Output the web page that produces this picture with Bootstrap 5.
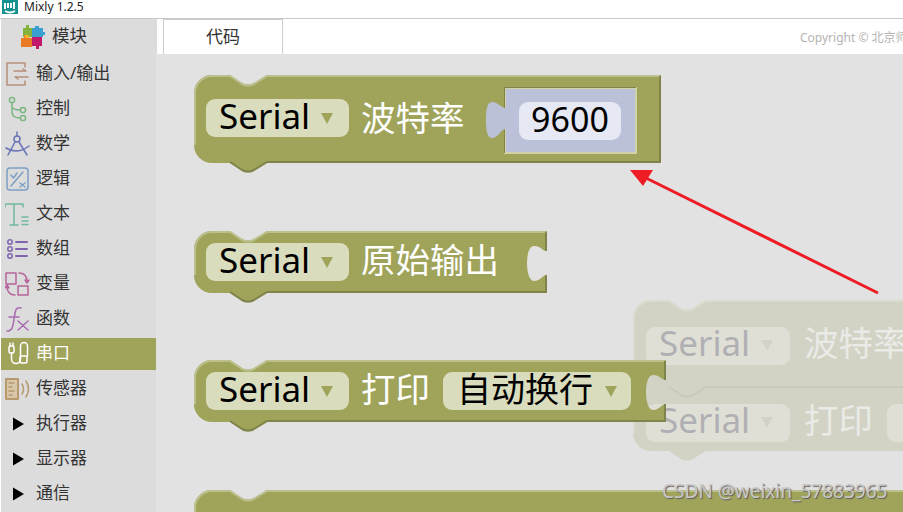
<!DOCTYPE html>
<html lang="zh">
<head>
<meta charset="utf-8">
<title>Mixly 1.2.5</title>
<link href="https://cdn.jsdelivr.net/npm/bootstrap@5.3.0/dist/css/bootstrap.min.css" rel="stylesheet">
<style>
html,body{width:903px;height:512px;overflow:hidden;background:#fff;font-family:"Noto Sans","Noto Sans CJK SC",sans-serif;}
.app-shell{width:903px;height:512px;}
.title-bar{height:19px;border-bottom:1px solid #c8c8c8;padding-left:2px;gap:6px;font-size:12px;line-height:13px;color:#222;}
.head-row{height:35px;}
.side-head{width:156px;margin-left:1px;background:#dcdcdc;font-size:17.500px;color:#333;gap:7px;padding-left:20px;line-height:34px;}
.side-head span{padding-bottom:3px;}
.tab-strip{flex:1;min-width:0;padding-left:6px;}
.code-tab{width:120px;height:35px;border:1px solid #ccc;border-bottom:0;font-size:17px;color:#333;background:#fff;}
.copy-note{font-size:12px;color:#b4b4b4;white-space:nowrap;margin-left:auto;width:103px;padding-top:3px;}
.main-row{height:458px;}
.side-list{width:155px;margin-left:1px;background:#dcdcdc;padding-top:4px;gap:3px;overflow:hidden;}
.side-item{height:32px;flex:none;padding-left:4px;gap:1px;font-size:17px;color:#333;line-height:30px;}
.side-item.is-on{background:#a0a45b;color:#fff;}
.side-ico{width:30px;height:32px;flex:none;fill:none;stroke-width:1.5;stroke-linecap:round;stroke-linejoin:round;}
.workspace{flex:1;background:#e2e2e2;position:relative;overflow:hidden;}
.blk{position:absolute;display:flex;align-items:center;gap:13px;padding-left:12px;color:#fff;font-size:34.500px;line-height:38px;white-space:nowrap;}
.blk-shape{position:absolute;left:0;top:0;overflow:visible;}
.blk>span{position:relative;padding-bottom:5px;margin-left:-1px;}
.blk-a{left:38px;top:21px;width:467px;height:88px;align-items:flex-start;padding-top:24px;}
.blk-b{left:38px;top:177px;width:353px;height:62px;}
.blk-c{left:38px;top:306px;width:472px;height:62px;}
.blk-d{left:38px;top:436px;width:709px;height:80px;}
.blk-g{left:477px;top:246px;width:300px;height:151px;color:#eaeae6;display:block;padding:0;}
.pill{position:relative;display:inline-flex;align-items:center;height:38px;border-radius:9px;background:#d9dcbd;color:#000;padding:0 16px 5px 13px;gap:11px;font-size:35px;}
.pill .tri{width:0;height:0;border-left:6.5px solid transparent;border-right:6.5px solid transparent;border-top:11px solid #a0a45b;margin-top:5px;}
.pill.cjk{font-size:34px;padding-right:14px;gap:12px;padding-left:14px;}
.pill.num{position:absolute;left:325px;top:27px;width:102px;justify-content:center;padding:0 0 5px;background:#e6e8f3;font-size:34px;}
.ghost-row{position:absolute;left:13px;display:flex;align-items:center;gap:14px;}
.ghost-row span{padding-bottom:5px;}
.ghost-one{top:24px;}
.ghost-two{top:101px;}
.blk-g .pill{background:#dfdfd6;color:#b0b0b4;padding-right:17px;}
.blk-g .pill .tri{border-top-color:#d3d3c5;}
.blk-g .pill.stub{width:40px;}
.arrow-layer{position:absolute;left:0;top:0;width:747px;height:458px;pointer-events:none;}
.mark-text{position:absolute;left:506px;top:425px;font-size:19px;line-height:24px;color:#c9c9c9;text-shadow:1px 1px 1px #5c5c5c;white-space:nowrap;}
</style>
</head>
<body>
<div class="app-shell d-flex flex-column">
  <div class="title-bar d-flex align-items-start">
    <svg width="16" height="14" viewBox="0 0 16 14"><rect width="16" height="14" fill="#13928f"/><path d="M3 3V9M6 3V8M9 3V8M12 2V9M3 11Q8 14 13 11" fill="none" stroke="#fff" stroke-width="2"/></svg>
    <span>Mixly 1.2.5</span>
  </div>
  <div class="head-row d-flex">
    <div class="side-head d-flex align-items-center">
      <svg width="24" height="24" viewBox="0 0 24 24">
        <path d="M2 3H5V0H8V3H11V6H13V9H11V12H2Z" fill="#84b33c"/>
        <path d="M11 3H14V1H18V3H22V7H24V10H22V12H11Z" fill="#3aa0cf"/>
        <path d="M0 13H3V10H7V13H11V22H0Z" fill="#ea7a26"/>
        <path d="M4 13H8V10H4Z" fill="#f0b325"/>
        <path d="M11 12H21V21H18V24H15V21H11Z" fill="#c2186b"/>
      </svg>
      <span>模块</span>
    </div>
    <div class="tab-strip d-flex align-items-start">
      <div class="code-tab d-flex align-items-center justify-content-center">代码</div>
      <div class="copy-note align-self-center">Copyright © 北京师</div>
    </div>
  </div>
  <div class="main-row d-flex">
    <div class="side-list d-flex flex-column">
      <div class="side-item d-flex">
        <svg class="side-ico" viewBox="0 0 30 32" stroke="#b78f7b"><path d="M20 9V5H2V27H20V23M9 13H21L18 11M23 19H10L13 21"/></svg><span>输入/输出</span></div>
      <div class="side-item d-flex">
        <svg class="side-ico" viewBox="0 0 30 32" stroke="#7cb680"><circle cx="7" cy="7" r="2.600"/><circle cx="18" cy="17" r="2.600"/><circle cx="18" cy="25" r="2.600"/><path d="M7 10V19Q7 25 15 25M7 13Q7 17 15 17"/></svg><span>控制</span></div>
      <div class="side-item d-flex">
        <svg class="side-ico" viewBox="0 0 30 32" stroke="#6a74b6"><circle cx="12" cy="11" r="3"/><path d="M12 4V8M10 14L3 27M14 14L22 27M1 20Q12 27 24 18"/></svg><span>数学</span></div>
      <div class="side-item d-flex">
        <svg class="side-ico" viewBox="0 0 30 32" stroke="#7d9fc4"><rect x="2" y="5" width="21" height="22" rx="3"/><path d="M18 9L6 23M6 12L8.500 15L12 10M15 20L20 24M20 20L15 24"/></svg><span>逻辑</span></div>
      <div class="side-item d-flex">
        <svg class="side-ico" viewBox="0 0 30 32" stroke="#72b89c"><path d="M0 9V6H18V9M9 6V27M5 27H13M17 19H23M17 23H23M17 26.500H23"/></svg><span>文本</span></div>
      <div class="side-item d-flex">
        <svg class="side-ico" viewBox="0 0 30 32" stroke="#7f64ad"><circle cx="5" cy="9" r="2.200"/><circle cx="5" cy="16" r="2.200"/><circle cx="5" cy="23" r="2.200"/><path d="M11 9H22M11 16H22M11 23H22" stroke-width="2"/></svg><span>数组</span></div>
      <div class="side-item d-flex">
        <svg class="side-ico" viewBox="0 0 30 32" stroke="#b5649a"><rect x="1" y="5" width="10" height="11"/><rect x="13" y="18" width="10" height="9"/><path d="M14 5Q22 5 22 14M20 12L22 15L24 12M10 27Q2 27 2 18M0 20L2 17L4 20"/></svg><span>变量</span></div>
      <div class="side-item d-flex">
        <svg class="side-ico" viewBox="0 0 30 32" stroke="#a86bb0"><path d="M16 5C10 3 10 10 9 16C8 22 8 28 2 28M4 14H14M13 18L23 27M23 18L13 27"/></svg><span>函数</span></div>
      <div class="side-item is-on d-flex">
        <svg class="side-ico" viewBox="0 0 30 32" stroke="#fff"><rect x="4" y="8" width="5" height="7" rx="1.500"/><rect x="15" y="18" width="7" height="7" rx="1.500"/><path d="M5 8V5M8 8V5M6.500 15V21A4.500 4.500 0 0 0 15.500 21V8A3.500 3.500 0 0 1 22.500 8V18"/></svg><span>串口</span></div>
      <div class="side-item d-flex">
        <svg class="side-ico" viewBox="0 0 30 32" stroke="#b89a6e"><rect x="1" y="6" width="12" height="20" fill="#d8c7a8" stroke-width="2"/><path d="M4 10H9M4 14H7M4 18H9M4 22H7M17 11Q20 16 17 21M21 8Q26 16 21 24"/></svg><span>传感器</span></div>
      <div class="side-item d-flex">
        <svg class="side-ico" viewBox="0 0 30 32"><polygon points="8,9.500 19,16 8,22.500" fill="#000"/></svg><span>执行器</span></div>
      <div class="side-item d-flex">
        <svg class="side-ico" viewBox="0 0 30 32"><polygon points="8,9.500 19,16 8,22.500" fill="#000"/></svg><span>显示器</span></div>
      <div class="side-item d-flex">
        <svg class="side-ico" viewBox="0 0 30 32"><polygon points="8,9.500 19,16 8,22.500" fill="#000"/></svg><span>通信</span></div>
    </div>
    <div class="workspace">
      <div class="blk blk-g">
        <svg class="blk-shape" width="300" height="161">
          <path d="M0 18A18 18 0 0 1 18 0H36L48 8Q54 11 60 8L73 0H300V151H73L60 159Q54 162 48 159L36 151H18A18 18 0 0 1 0 133Z" fill="#d3d3c5"/>
          <path d="M1 133V18A17 17 0 0 1 18 1H36L48 9Q54 12 60 9L73 1H300" fill="none" stroke="#dadacf" stroke-width="2"/>
          <path d="M36 87L48 95Q54 98 60 95L73 87H300" fill="none" stroke="#c9c9ba" stroke-width="2"/>
        </svg>
        <div class="ghost-row ghost-one"><div class="pill">Serial<i class="tri"></i></div><span>波特率</span></div>
        <div class="ghost-row ghost-two"><div class="pill">Serial<i class="tri"></i></div><span>打印</span><div class="pill stub"></div></div>
      </div>

      <div class="blk blk-a">
        <svg class="blk-shape" width="467" height="99">
          <path d="M0 18A18 18 0 0 1 18 0H36L48 8Q54 11 60 8L73 0H467V88H73L60 96Q54 99 48 96L36 88H18A18 18 0 0 1 0 70Z" fill="#a0a45b"/>
          <path d="M1 70V18A17 17 0 0 1 18 1H36L48 9Q54 12 60 9L73 1H466" fill="none" stroke="#bcc08d" stroke-width="2"/>
          <path d="M466 1V87H73L60 95Q54 98 48 95L36 87" fill="none" stroke="#80834a" stroke-width="2"/>
          <rect x="310" y="12" width="133" height="67" fill="#d0d2a8"/>
          <path d="M310 12H442V13H311V78H310Z" fill="#80834a"/>
          <rect x="312" y="14" width="129" height="63" fill="#bcc1da"/>
          <path d="M312 33C306 33 305 27 298 27C293 27 292 36 292 45C292 54 293 63 298 63C305 63 306 54 312 54Z" fill="#bcc1da"/>
        </svg>
        <div class="pill">Serial<i class="tri"></i></div><span>波特率</span>
        <div class="pill num">9600</div>
      </div>

      <div class="blk blk-b">
        <svg class="blk-shape" width="353" height="73">
          <path d="M0 18A18 18 0 0 1 18 0H36L48 8Q54 11 60 8L73 0H353V20C348 20 347 15 340 15C335 15 333 24 333 32C333 40 335 50 340 50C347 50 348 44 353 44V62H73L60 70Q54 73 48 70L36 62H18A18 18 0 0 1 0 44Z" fill="#a0a45b"/>
          <path d="M1 44V18A17 17 0 0 1 18 1H36L48 9Q54 12 60 9L73 1H352" fill="none" stroke="#bcc08d" stroke-width="2"/>
          <path d="M352 44V61H73L60 69Q54 72 48 69L36 61M352 1V20" fill="none" stroke="#80834a" stroke-width="2"/>
        </svg>
        <div class="pill">Serial<i class="tri"></i></div><span>原始输出</span>
      </div>

      <div class="blk blk-c">
        <svg class="blk-shape" width="472" height="73">
          <path d="M0 18A18 18 0 0 1 18 0H36L48 8Q54 11 60 8L73 0H472V20C467 20 466 15 459 15C454 15 452 24 452 32C452 40 454 50 459 50C466 50 467 44 472 44V62H73L60 70Q54 73 48 70L36 62H18A18 18 0 0 1 0 44Z" fill="#a0a45b"/>
          <path d="M1 44V18A17 17 0 0 1 18 1H36L48 9Q54 12 60 9L73 1H471" fill="none" stroke="#bcc08d" stroke-width="2"/>
          <path d="M471 44V61H73L60 69Q54 72 48 69L36 61M471 1V20" fill="none" stroke="#80834a" stroke-width="2"/>
        </svg>
        <div class="pill">Serial<i class="tri"></i></div><span>打印</span>
        <div class="pill cjk">自动换行<i class="tri"></i></div>
      </div>

      <div class="blk blk-d">
        <svg class="blk-shape" width="709" height="80">
          <path d="M0 18A18 18 0 0 1 18 0H36L48 8Q54 11 60 8L73 0H709V80H0Z" fill="#a0a45b"/>
          <path d="M1 80V18A17 17 0 0 1 18 1H36L48 9Q54 12 60 9L73 1H709" fill="none" stroke="#bcc08d" stroke-width="2"/>
        </svg>
      </div>

      <svg class="arrow-layer" viewBox="0 0 747 458">
        <path d="M722 239L490 124" stroke="#ee1c25" stroke-width="3" fill="none"/>
        <polygon points="474,116 497,116 487,132" fill="#ee1c25"/>
      </svg>
      <div class="mark-text">CSDN @weixin_57883965</div>
    </div>
  </div>
</div>
<script src="https://cdn.jsdelivr.net/npm/bootstrap@5.3.0/dist/js/bootstrap.bundle.min.js"></script>
</body>
</html>
